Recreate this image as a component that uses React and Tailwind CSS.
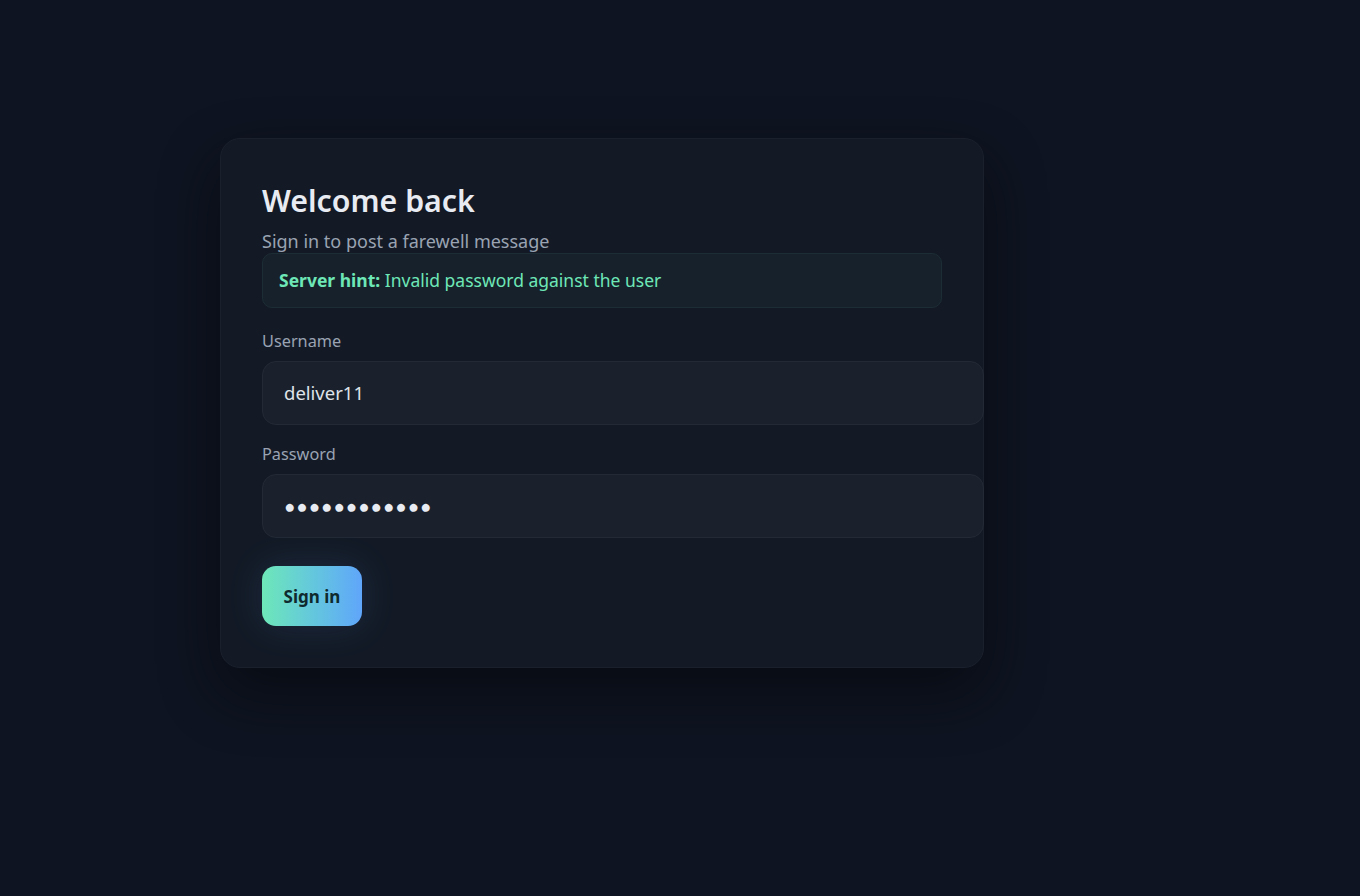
import React from "react";

export default function App() {
  return (
    <div className="min-h-[896px] w-full bg-[#0e1421] pt-[138px] pl-[220px] font-['Noto_Sans',sans-serif]">
      <div className="w-[764px] rounded-[20px] border border-[#1a212d] bg-[#131a26] p-[41px] shadow-[0_24px_60px_rgba(0,0,0,0.45)]">
        <h1 className="mt-[3px] mb-[10px] text-[30.3px] leading-[36px] font-semibold text-[#e8ecf2]">
          Welcome back
        </h1>
        <p className="text-[18px] leading-[24px] text-[#9aa3b2]">
          Sign in to post a farewell message
        </p>
        <div className="rounded-[10px] border border-[#1d2d35] bg-[#16212b] px-4 py-[14px] text-[17.5px] leading-[25px] text-[#6ee7b7]">
          <span className="font-bold">Server hint:</span> Invalid password against the user
        </div>
        <label className="mt-[23px] block text-[16.3px] leading-[20px] text-[#9aa3b2]">Username</label>
        <div className="mt-[10px] box-content w-full rounded-[14px] border border-[#232a36] bg-[#1b212c] px-5 py-[19px] text-[18.5px] leading-[24px] text-[#dfe3ea]">
          <span className="ml-[1px]">deliver11</span>
        </div>
        <label className="mt-[19px] block text-[16.3px] leading-[20px] text-[#9aa3b2]">Password</label>
        <div className="mt-[10px] box-content w-full rounded-[14px] border border-[#232a36] bg-[#1b212c] px-5 py-[19px] text-[18.5px] leading-[24px] text-[#e8ecf2]">
          <span className="ml-[1px] tracking-[1.2px]">●●●●●●●●●●●●</span>
        </div>
        <button className="mt-[28px] h-[60px] w-[100px] rounded-[14px] bg-gradient-to-r from-[#6ee7b7] to-[#60a5fa] pt-[2px] text-[17px] font-bold text-[#0f2a2e] shadow-[0_0_36px_rgba(96,165,250,0.12)]">
          Sign in
        </button>
      </div>
    </div>
  );
}
